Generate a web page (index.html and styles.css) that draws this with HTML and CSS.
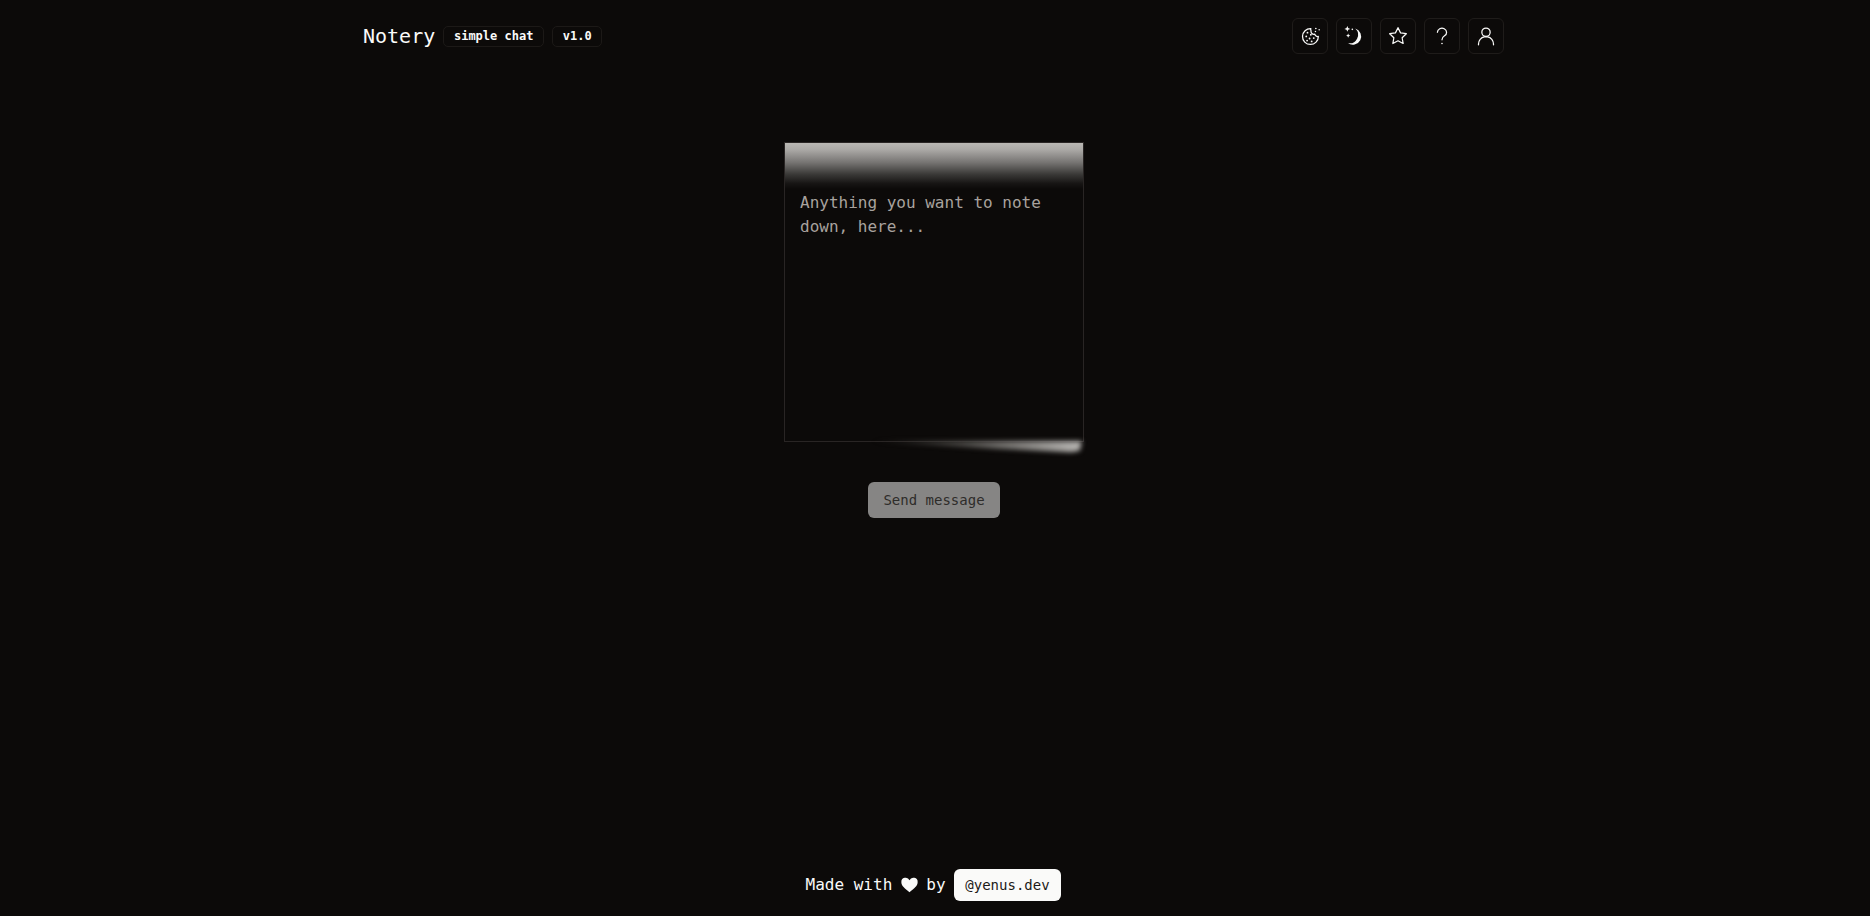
FILE: index.html
```html
<!DOCTYPE html>
<html lang="en">
<head>
<meta charset="utf-8">
<title>Notery</title>
<link rel="stylesheet" href="styles.css">
</head>
<body>
<header class="topbar">
  <div class="brand">
    <h1 class="logo">Notery</h1>
    <span class="badge">simple chat</span>
    <span class="badge">v1.0</span>
  </div>
  <nav class="tools">
    <button class="tool" aria-label="Cookies"><svg viewBox="0 0 24 24"><path d="M13 3.200a9.500 9.500 0 1 0 9 9.300 3.500 3.500 0 0 1-4.300-2.700 3.600 3.600 0 0 1-4.500-4.200 3 3 0 0 1-.2-2.400z"/><g class="dots"><circle cx="9" cy="8" r="1.100"/><circle cx="13" cy="10.500" r="1.100"/><circle cx="7.500" cy="12.500" r="1.100"/><circle cx="11.500" cy="15" r="1.100"/><circle cx="16.500" cy="14.500" r="1.100"/><circle cx="8.500" cy="17.500" r="1.100"/><circle cx="14" cy="18.500" r="1.100"/><circle cx="19" cy="3" r="1"/><circle cx="23" cy="4.500" r=".9"/><circle cx="18.500" cy="6.500" r=".9"/></g></svg></button>
    <button class="tool" aria-label="Theme"><svg viewBox="0 0 24 24"><path class="moon" d="M13.500 3A10 10 0 1 1 4.500 20.500 10.200 10.200 0 0 0 13.500 3z"/><g class="dots"><path d="M4 0l1 2.500L7.500 3.500 5 4.500l-1 2.500-1-2.500L.5 3.500 3 2.500z"/><path d="M5 9l.8 1.700 1.700.8-1.700.8L5 14l-.8-1.700-1.700-.8 1.700-.8z"/><circle cx="10" cy="4" r="1"/></g></svg></button>
    <button class="tool" aria-label="Favourites"><svg viewBox="0 0 24 24"><path d="M12 17.750l-6.172 3.245 1.179-6.873-5-4.867 6.900-1L12 2l3.086 6.255 6.900 1-5 4.867 1.179 6.873z"/></svg></button>
    <button class="tool" aria-label="Help"><svg viewBox="0 0 24 24"><path d="M6.500 7.500a5.500 5 0 1 1 8.500 4.300c-2 1.300-3 2.400-3 4.700"/><circle class="dotfill" cx="12" cy="21" r="1"/></svg></button>
    <button class="tool" aria-label="Account"><svg viewBox="0 0 24 24"><circle cx="12" cy="7.500" r="5"/><path d="M3 22.500v-1c0-4 3-8 7-8.500h4c4 .5 7 4.500 7 8.500v1"/></svg></button>
  </nav>
</header>

<main class="composer">
  <div class="note">
    <span class="note-shine"></span>
    <textarea class="note-input" placeholder="Anything you want to note down, here..."></textarea>
    <span class="note-glow"></span>
  </div>
  <button class="send">Send message</button>
</main>

<footer class="credit">
  <span class="credit-text">Made with</span>
  <svg class="heart" viewBox="0 0 24 24"><path d="M12 21.500C5 16 .5 12.500.5 7.500a6 6 0 0 1 11.500-2.800A6 6 0 0 1 23.500 7.500c0 5-4.500 8.500-11.500 14z"/></svg>
  <span class="credit-text">by</span>
  <a class="handle">@yenus.dev</a>
</footer>
</body>
</html>
```
FILE: styles.css
```css
* { box-sizing: border-box; }
html, body { height: 100%; }
body {
  margin: 0;
  background: #0c0a09;
  color: #fafaf9;
  font-family: "DejaVu Sans Mono", "Liberation Mono", monospace;
  display: flex;
  flex-direction: column;
  overflow: hidden;
}
.topbar {
  width: 1141px;
  margin: 0 0 0 363px;
  padding-top: 18px;
  display: flex;
  align-items: center;
  justify-content: space-between;
}
.brand { display: flex; align-items: center; gap: 8px; }
.logo { margin: 0; font-size: 20px; line-height: 28px; font-weight: 400; }
.badge {
  height: 21px;
  padding: 0 9.700px;
  border: 1px solid #1c1917;
  border-radius: 5px;
  font-size: 12px;
  font-weight: 700;
  line-height: 19px;
}
.tools { display: flex; gap: 8px; }
.tool {
  width: 36px;
  height: 36px;
  padding: 0;
  background: transparent;
  border: 1px solid #1f1c1a;
  border-radius: 6px;
  display: flex;
  align-items: center;
  justify-content: center;
}
.tool svg {
  width: 20px;
  height: 20px;
  overflow: visible;
  fill: none;
  stroke: #fafaf9;
  stroke-width: 1.500;
  stroke-linecap: round;
  stroke-linejoin: round;
}
.tool .dots, .tool .dotfill, .tool .moon { fill: #fafaf9; stroke: none; }
.composer {
  flex: 1;
  display: flex;
  flex-direction: column;
  align-items: center;
  padding: 88px 2px 0 0;
}
.note {
  position: relative;
  width: 300px;
  height: 300px;
  border: 1px solid #292524;
  background: #0c0a09;
}
.note-shine {
  position: absolute;
  inset: 0 0 auto 0;
  height: 46px;
  background: linear-gradient(to bottom, #bab8b4 0%, #aaa8a5 15%, #777573 42%, #3a3937 68%, #171514 88%, #0c0a09 100%);
  pointer-events: none;
}
.note-input {
  display: block;
  width: 100%;
  height: 100%;
  padding: 48px 15px 15px;
  background: transparent;
  border: 0;
  outline: 0;
  resize: none;
  color: #fafaf9;
  font: 16px/24px "DejaVu Sans Mono", "Liberation Mono", monospace;
}
.note-input::placeholder { color: #a8a29e; opacity: 1; }
.note-glow {
  position: absolute;
  right: 1px;
  top: 100%;
  width: 215px;
  height: 14px;
  filter: blur(2.500px);
  pointer-events: none;
}
.note-glow::before {
  content: "";
  display: block;
  height: 100%;
  clip-path: polygon(0 0, 100% 0, 99% 70%, 95% 80%, 60% 55%);
  background: linear-gradient(to right, transparent 0%, #4c4a47 45%, #b0aeab 96%);
}
.send {
  margin-top: 40px;
  height: 36px;
  padding: 0 15.800px;
  border: 0;
  border-radius: 6px;
  background: #868584;
  color: #2e2c2a;
  font: 14px/20px "DejaVu Sans Mono", "Liberation Mono", monospace;
}
.credit {
  height: 47px;
  padding: 0 3px 15px 0;
  display: flex;
  align-items: center;
  justify-content: center;
  gap: 8px;
  font-size: 16px;
}
.credit-text { margin-bottom: 1px; }
.heart { width: 17px; height: 17px; margin-left: 1px; fill: #fafaf9; }
.handle {
  height: 32px;
  padding: 0 11.800px;
  border-radius: 6px;
  background: #fafaf9;
  color: #1c1917;
  font-size: 14px;
  line-height: 32px;
}
```
